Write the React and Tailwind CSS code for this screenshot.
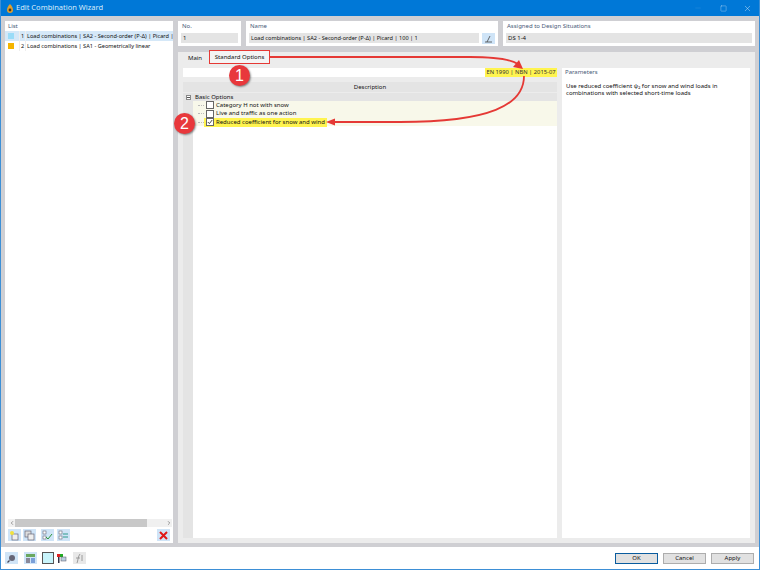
// Edit Combination Wizard dialog
import { X, Minus, Square, ChevronLeft, ChevronRight } from "lucide-react";

const font = { fontFamily: '"Noto Sans", "Open Sans", sans-serif' };

function Field({ label, className, children }) {
  return (
    <div className={`bg-white h-[25px] px-[3px] pt-[1px] ${className}`}>
      <p className="text-[6px] leading-[9px] text-[#4a5a78] pl-[1px]">{label}</p>
      <div className="flex gap-[3px] mt-[2px]">{children}</div>
    </div>
  );
}

function ToolBtn({ children, className = "" }) {
  return (
    <div className={`w-[13px] h-[12px] bg-[#cfe4f7] flex items-center justify-center shrink-0 ${className}`}>
      <svg width="11" height="11" viewBox="0 0 11 11">{children}</svg>
    </div>
  );
}

function OptionRow({ label, checked, mark }) {
  return (
    <div className="h-[8.5px] flex items-center pl-[5px]">
      <div className="w-[6px] border-t border-dotted border-[#bbb]" />
      <div className={`flex items-center h-[9px] pl-[2px] pr-[2px] ${mark ? "bg-[#fff44f]" : ""}`}>
        <div className="w-[8px] h-[8px] border border-[#666] bg-white flex items-center justify-center shrink-0">
          {checked && (
            <svg width="6" height="6" viewBox="0 0 6 6">
              <path d="M0.8 3 L2.4 4.6 L5.2 1" fill="none" stroke="#333" strokeWidth="0.9" />
            </svg>
          )}
        </div>
        <span className="ml-[2px] text-[6px] leading-[9px] text-[#111] whitespace-nowrap">{label}</span>
      </div>
    </div>
  );
}

function Badge({ n, className }) {
  return (
    <div
      className={`absolute w-[21px] h-[21px] rounded-full bg-[#e8383c] text-white text-[16px] flex items-center justify-center shadow-[1px_1px_2px_rgba(0,0,0,0.45)] ${className}`}
      style={{ fontFamily: '"Liberation Sans", sans-serif' }}
    >
      {n}
    </div>
  );
}

function DialogButton({ label, primary }) {
  return (
    <button
      className={`w-[43px] h-[11px] bg-[#e1e1e1] text-[6px] leading-none text-[#111] border ${
        primary ? "border-[#0a5c9e] border-[1.5px]" : "border-[#adadad]"
      }`}
    >
      {label}
    </button>
  );
}

function ListRow({ swatch, n, text, selected }) {
  return (
    <div className={`flex items-center h-[10px] text-[5.6px] text-[#111] whitespace-nowrap ${selected ? "bg-[#d5e8f8]" : ""}`}>
      <div className={`w-[6px] h-[6px] ml-[3px] shrink-0 ${swatch}`} />
      <span className="ml-[5px] w-[7px] h-full leading-[10px] text-center border-x border-[#eeeeee] shrink-0">{n}</span>
      <span className="ml-[1px]">{text}</span>
    </div>
  );
}

export default function App() {
  return (
    <div
      className="relative w-[760px] h-[570px] flex flex-col overflow-hidden bg-[#cfcfd3] border border-[#3d8fd6] border-t-0"
      style={font}
    >
      {/* title bar */}
      <div className="h-[16px] bg-[#0078d7] flex items-center pl-[5px] -mx-[1px] shrink-0">
        <svg width="10" height="11" viewBox="0 0 10 11">
          <path d="M5 1 C7 3 8 5 8 7 A3 3 0 0 1 2 7 C2 5 3 3 5 1Z" fill="#e0a030" />
          <circle cx="5" cy="7" r="1.4" fill="#4a3a20" />
        </svg>
        <span className="ml-[1px] text-[7.5px] text-[#d8ecfb]">Edit Combination Wizard</span>
        <div className="ml-auto flex items-center text-white">
          <Minus size={8} strokeWidth={1} className="mr-[18px] text-[#3d9be3]" />
          <Square size={7} strokeWidth={1} className="mr-[16px]" />
          <X size={9} strokeWidth={1} className="mr-[8px]" />
        </div>
      </div>

      <div className="flex-1 flex gap-[5px] pl-[4px] pr-[4px] pt-[5px] pb-[4px] min-h-0">
        {/* left list */}
        <div className="w-[168px] shrink-0 bg-white flex flex-col">
          <p className="text-[6px] leading-[9px] text-[#4a5a78] pl-[3px] pt-[1px]">List</p>
          <div className="flex-1 flex flex-col min-h-0">
            <ListRow selected swatch="bg-[#9adcf8]" n="1" text="Load combinations | SA2 - Second-order (P-Δ) | Picard |" />
            <ListRow swatch="bg-[#f5b400]" n="2" text="Load combinations | SA1 - Geometrically linear" />
            <div className="flex-1" />
          </div>
          <div className="h-[8px] flex items-center bg-[#f0f0f0] ml-[3px] mr-[1px] text-[#444] shrink-0">
            <div className="w-[7px] flex justify-center">
              <ChevronLeft size={6} strokeWidth={2} />
            </div>
            <div className="w-[132px] h-full bg-[#c8c8c8]" />
            <div className="flex-1" />
            <div className="w-[7px] flex justify-center">
              <ChevronRight size={6} strokeWidth={2} />
            </div>
          </div>
          <div className="flex items-center h-[16px] pl-[3px] pr-[3px] shrink-0">
            <ToolBtn>
              <rect x="3" y="4" width="6" height="6" fill="#eee" stroke="#667" strokeWidth="0.7" />
              <circle cx="3" cy="3" r="2" fill="#f3e23c" />
            </ToolBtn>
            <ToolBtn className="ml-[2px]">
              <rect x="1" y="1" width="6" height="6" fill="#ddd" stroke="#667" strokeWidth="0.7" />
              <rect x="4" y="4" width="6" height="6" fill="#eee" stroke="#667" strokeWidth="0.7" />
            </ToolBtn>
            <ToolBtn className="ml-[5px]">
              <rect x="1" y="1" width="3" height="3" fill="#fff" stroke="#667" strokeWidth="0.6" />
              <rect x="1" y="6" width="3" height="3" fill="#fff" stroke="#667" strokeWidth="0.6" />
              <path d="M4 7 L6 9 L10 4" fill="none" stroke="#2f9a3c" strokeWidth="1" />
            </ToolBtn>
            <ToolBtn className="ml-[3px]">
              <rect x="1" y="1" width="3" height="3" fill="#fff" stroke="#667" strokeWidth="0.6" />
              <rect x="1" y="6" width="3" height="3" fill="#fff" stroke="#667" strokeWidth="0.6" />
              <path d="M5 4 H10 M5 7 H10" fill="none" stroke="#2f9a8c" strokeWidth="1" />
            </ToolBtn>
            <ToolBtn className="ml-auto">
              <path d="M2 2 L9 9 M9 2 L2 9" stroke="#e01818" strokeWidth="2" />
            </ToolBtn>
          </div>
        </div>

        {/* right side */}
        <div className="flex-1 flex flex-col min-w-0">
          <div className="flex gap-[5px] h-[25px] shrink-0">
            <Field label="No." className="w-[63px]">
              <div className="h-[10px] flex-1 bg-[#e4e4e4] text-[6px] leading-[10px] pl-[2px] text-[#111]">1</div>
            </Field>
            <Field label="Name" className="w-[252px]">
              <div className="h-[10px] flex-1 bg-[#e4e4e4] text-[5.6px] leading-[10px] pl-[2px] text-[#111] whitespace-nowrap">
                Load combinations | SA2 - Second-order (P-Δ) | Picard | 100 | 1
              </div>
              <div className="w-[13px] h-[11px] bg-[#cfe4f7] flex items-center justify-center shrink-0">
                <svg width="9" height="8" viewBox="0 0 9 8">
                  <path d="M3 7 L6 1 M1 7 H8" stroke="#444" strokeWidth="0.8" fill="none" />
                </svg>
              </div>
            </Field>
            <Field label="Assigned to Design Situations" className="flex-1">
              <div className="h-[10px] flex-1 bg-[#e4e4e4] text-[6px] leading-[10px] pl-[2px] text-[#111]">DS 1-4</div>
            </Field>
          </div>

          {/* tabbed area */}
          <div className="mt-[6px] flex-1 bg-[#ececec] flex flex-col min-h-0 pr-[5px]">
            <div className="h-[14px] flex items-start shrink-0 text-[6px] text-[#111]">
              <span className="ml-[10px] leading-[12px]">Main</span>
              <div className="ml-[7px] -mt-[2px] h-[14px] w-[61px] bg-[#f4f4f4] border-[1.5px] border-[#e53935] flex items-center justify-center whitespace-nowrap">
                Standard Options
              </div>
            </div>
            <div className="flex-1 flex gap-[5px] pl-[5px] pb-[5px] pt-[2px] min-h-0">
              <div className="w-[374px] shrink-0 flex flex-col min-h-0">
                <div className="h-[9px] bg-white flex justify-end shrink-0">
                  <div className="bg-[#fff44f] text-[5.8px] leading-[9px] w-[72px] text-center text-[#333] whitespace-nowrap">
                    EN 1990 | NBN | 2015-07
                  </div>
                </div>
                <div className="h-[10px] mt-[5px] bg-[#e4e4e4] text-center text-[6px] leading-[10px] text-[#111] shrink-0">
                  Description
                </div>
                <div className="h-[8px] mt-[1px] bg-[#e4e4e4] flex items-center text-[6px] text-[#111] shrink-0">
                  <div className="w-[5px] h-[5px] ml-[3px] mr-[4px] border border-[#888] bg-white flex items-center justify-center">
                    <div className="w-[3px] h-px bg-[#555]" />
                  </div>
                  Basic Options
                </div>
                <div className="flex-1 flex min-h-0">
                  <div className="w-[10px] bg-[#e4e4e4] shrink-0" />
                  <div className="flex-1 bg-white">
                    <div className="h-[25px] bg-[#f8f8ea]">
                      <OptionRow label="Category H not with snow" />
                      <OptionRow label="Live and traffic as one action" />
                      <OptionRow label="Reduced coefficient for snow and wind" checked mark />
                    </div>
                  </div>
                </div>
              </div>
              <div className="flex-1 bg-white px-[3px]">
                <p className="text-[6px] leading-[9px] text-[#4a5a78]">Parameters</p>
                <p className="mt-[6px] text-[6px] leading-[7.4px] pl-[1px] text-[#111]">
                  Use reduced coefficient ψ₂ for snow and wind loads in combinations with selected short-time loads
                </p>
              </div>
            </div>
          </div>
        </div>
      </div>

      {/* footer */}
      <div className="h-[22px] bg-white flex items-center pl-[4px] pr-[5px] shrink-0">
        <ToolBtn>
          <circle cx="6" cy="5" r="3" fill="#667" />
          <path d="M3.5 7.5 L1.5 9.5" stroke="#445" strokeWidth="1.2" />
        </ToolBtn>
        <ToolBtn className="ml-[6px]">
          <rect x="1" y="1" width="9" height="3" fill="#6aa860" />
          <rect x="1" y="5" width="4" height="5" fill="#889" />
          <rect x="6" y="5" width="4" height="5" fill="#7a9fd8" />
        </ToolBtn>
        <div className="ml-[5px] w-[12px] h-[12px] bg-[#c8f4fb] border border-[#555]" />
        <ToolBtn className="ml-[1px] !bg-white">
          <rect x="1" y="1" width="3" height="3" fill="#d22" />
          <rect x="4" y="1" width="3" height="3" fill="#2a2" />
          <rect x="2" y="4" width="1.5" height="6" fill="#334" />
          <rect x="5" y="4" width="5" height="4" fill="#bcd" stroke="#556" strokeWidth="0.5" />
        </ToolBtn>
        <ToolBtn className="ml-[5px] !bg-[#e8e8e8]">
          <path d="M3 10 C4 8 4 3 6 1 M2 5 H6 M8 2 L8 8" stroke="#888" strokeWidth="0.8" fill="none" />
        </ToolBtn>
        <div className="ml-auto flex gap-[5px]">
          <DialogButton label="OK" primary />
          <DialogButton label="Cancel" />
          <DialogButton label="Apply" />
        </div>
      </div>

      {/* callouts */}
      <Badge n="1" className="left-[228px] top-[65px]" />
      <Badge n="2" className="left-[173px] top-[113px]" />
      <svg className="absolute -left-[1px] top-0 pointer-events-none" width="760" height="570" viewBox="0 0 760 570">
        <path
          d="M270 57 L470 57 C495 57 510 59 518 64"
          fill="none"
          stroke="#e53935"
          strokeWidth="1.8"
        />
        <path d="M523 69 L513 67 L519 60 Z" fill="#e53935" />
        <path
          d="M524 76 C524 105 490 122 400 122 L332 122"
          fill="none"
          stroke="#e53935"
          strokeWidth="1.8"
        />
        <path d="M326 122 L335 118.5 L335 125.5 Z" fill="#e53935" />
      </svg>
    </div>
  );
}
